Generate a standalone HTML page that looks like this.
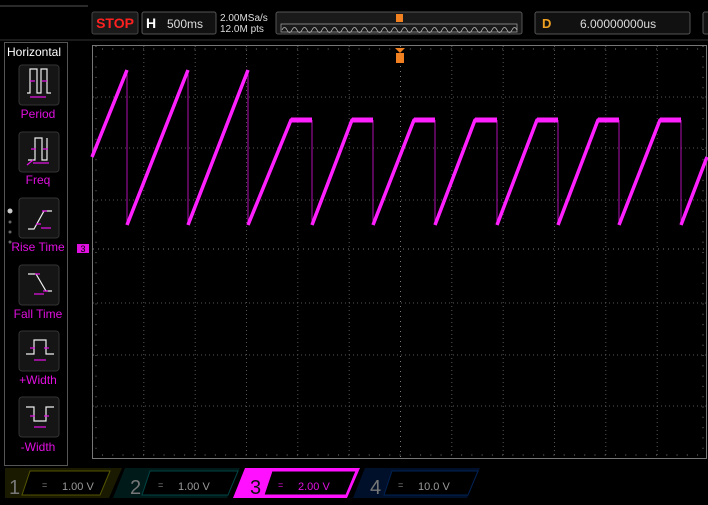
<!DOCTYPE html><html><head><style>
body{margin:0;background:#000;width:708px;height:500px;overflow:hidden;font-family:"Liberation Sans",sans-serif;}
</style></head><body>
<svg width="708" height="500" xmlns="http://www.w3.org/2000/svg" font-family="Liberation Sans, sans-serif">
<rect width="708" height="500" fill="#000"/>
<line x1="0" y1="6" x2="88" y2="6" stroke="#555"/>
<line x1="0" y1="40" x2="708" y2="40" stroke="#333"/>
<!-- top bar -->
<rect x="92" y="12" width="46" height="22" rx="2" fill="#1a1a1a" stroke="#444"/>
<text x="115" y="28" fill="#ff2020" font-size="14" font-weight="bold" text-anchor="middle">STOP</text>
<rect x="142" y="12" width="74" height="22" rx="2" fill="#111" stroke="#555"/>
<text x="146" y="28" fill="#fff" font-size="14" font-weight="bold">H</text>
<text x="167" y="28" fill="#ddd" font-size="12">500ms</text>
<text x="220" y="21" fill="#ddd" font-size="10">2.00MSa/s</text>
<text x="220" y="32" fill="#ddd" font-size="10">12.0M pts</text>
<rect x="276" y="12" width="246" height="22" rx="2" fill="#1a1a1a" stroke="#555"/>
<rect x="281" y="24" width="236" height="8" fill="none" stroke="#aaa" stroke-width="0.7"/>
<path d="M282 30 q2.5 -5 5 0 t5 0 t5 0 t5 0 t5 0 t5 0 t5 0 t5 0 t5 0 t5 0 t5 0 t5 0 t5 0 t5 0 t5 0 t5 0 t5 0 t5 0 t5 0 t5 0 t5 0 t5 0 t5 0 t5 0 t5 0 t5 0 t5 0 t5 0 t5 0 t5 0 t5 0 t5 0 t5 0 t5 0 t5 0 t5 0 t5 0 t5 0 t5 0 t5 0 t5 0 t5 0 t5 0 t5 0 t5 0 t5 0 t5 0" fill="none" stroke="#bbb" stroke-width="0.8"/>
<rect x="396" y="14" width="7" height="8" fill="#f08020"/>
<rect x="535" y="12" width="155" height="22" rx="2" fill="#111" stroke="#555"/>
<text x="542" y="28" fill="#f0a020" font-size="13" font-weight="bold">D</text>
<text x="580" y="28" fill="#ddd" font-size="12">6.00000000us</text>
<rect x="703" y="12" width="10" height="22" rx="2" fill="#111" stroke="#555"/>
<!-- left panel -->
<rect x="4.5" y="42.5" width="63" height="423" fill="#000" stroke="#555"/>
<text x="7" y="56" fill="#fff" font-size="12">Horizontal</text>
<g fill="#151515" stroke="#333">
<rect x="19" y="65" width="40" height="40" rx="3"/><rect x="19" y="132" width="40" height="40" rx="3"/>
<rect x="19" y="198" width="40" height="40" rx="3"/><rect x="19" y="265" width="40" height="40" rx="3"/>
<rect x="19" y="331" width="40" height="40" rx="3"/><rect x="19" y="397" width="40" height="40" rx="3"/></g>
<g fill="none" stroke="#eee" stroke-width="1.2">
<path d="M27 93 h3 v-24 h7 v24 h4 v-24 h6 v24 h4"/>
<path d="M28 160 h7 v-22 h7 v22 h5 v-22"/>
<path d="M28 229 h6 l10 -18 h8"/>
<path d="M28 274 h8 l10 17 h6"/>
<path d="M26 354 h8 v-14 h12 v14 h8"/>
<path d="M26 407 h8 v14 h12 v-14 h8"/></g>
<g stroke="#e010e0" stroke-width="1.3" fill="none">
<path d="M30 81 h5 M42 81 h5 M30 97 h16"/>
<path d="M31 149 h5 M43 149 h5 M33 163 h16 M27 165 l6 -5"/>
<path d="M36 224 h5 M42 211 h5 M41 228 h10"/>
<path d="M35 274 h5 M43 291 h5 M34 294 h10"/>
<path d="M30 348 h5 M44 348 h5 M34 360 h12"/>
<path d="M30 416 h5 M44 416 h5 M34 427 h12"/></g>
<g fill="#e010e0" font-size="12" text-anchor="middle">
<text x="38" y="118">Period</text><text x="38" y="184">Freq</text>
<text x="38" y="251">Rise Time</text><text x="38" y="318">Fall Time</text>
<text x="38" y="384">+Width</text><text x="38" y="451">-Width</text></g>
<circle cx="10" cy="211" r="2.5" fill="#ccc"/><circle cx="10" cy="222" r="1.5" fill="#666"/><circle cx="10" cy="232" r="1.5" fill="#666"/><circle cx="10" cy="242" r="1.5" fill="#666"/>
<!-- grid -->
<rect x="92.5" y="45.5" width="614" height="413" fill="none" stroke="#777"/>
<g stroke="#555" stroke-dasharray="1 3">
<line x1="143.8" y1="46" x2="143.8" y2="458"/><line x1="195.2" y1="46" x2="195.2" y2="458"/><line x1="246.5" y1="46" x2="246.5" y2="458"/><line x1="297.8" y1="46" x2="297.8" y2="458"/><line x1="349.2" y1="46" x2="349.2" y2="458"/><line x1="451.8" y1="46" x2="451.8" y2="458"/><line x1="503.2" y1="46" x2="503.2" y2="458"/><line x1="554.5" y1="46" x2="554.5" y2="458"/><line x1="605.8" y1="46" x2="605.8" y2="458"/><line x1="657.2" y1="46" x2="657.2" y2="458"/>
<line x1="93" y1="97" x2="706" y2="97"/><line x1="93" y1="148" x2="706" y2="148"/><line x1="93" y1="200" x2="706" y2="200"/><line x1="93" y1="303" x2="706" y2="303"/><line x1="93" y1="355" x2="706" y2="355"/><line x1="93" y1="406" x2="706" y2="406"/></g>
<g stroke="#777">
<line x1="93" y1="249" x2="706" y2="249" stroke-dasharray="1 4"/>
<line x1="400.5" y1="46" x2="400.5" y2="458" stroke-dasharray="1 4"/>
<line x1="93" y1="49" x2="706" y2="49" stroke-dasharray="1 9.26" stroke-dashoffset="-9"/>
<line x1="93" y1="455" x2="706" y2="455" stroke-dasharray="1 9.26" stroke-dashoffset="-9"/>
<line x1="96" y1="46" x2="96" y2="458" stroke-dasharray="1 9.3"/>
<line x1="703" y1="46" x2="703" y2="458" stroke-dasharray="1 9.3"/></g>
<path d="M395 48 h10 l-5 5z" fill="#f08020"/><rect x="396" y="53" width="8" height="10" fill="#f08020"/>
<rect x="77" y="244" width="12" height="9" fill="#e010e0"/><text x="83" y="252" fill="#000" font-size="9" text-anchor="middle">3</text>
<!-- waveform -->
<g stroke="#b010b0" stroke-width="1"><path d="M127 70V225M188 70V225M248 70V225M312 120V225M373 120V225M435 120V225M497 120V225M558 120V225M619 120V225M681 120V225"/></g>
<g stroke="#ff20ff" stroke-width="3.5" fill="none" stroke-linejoin="round">
<path d="M92 157L127 70M127 225L188 70M188 225L248 70M248 225L291 120H312M312 225L352 120H373M373 225L414 120H435M435 225L475 120H497M497 225L537 120H558M558 225L598 120H619M619 225L660 120H681M681 225L707 157"/></g>
<g stroke="#ff20ff" stroke-width="5"><path d="M291 120H312M352 120H373M414 120H435M475 120H497M537 120H558M598 120H619M660 120H681"/></g>
<!-- bottom channels -->
<path d="M5 468H122L109 498H5Z" fill="#1a1a00"/><text x="9" y="494" fill="#777" font-size="20">1</text>
<path d="M30 471H110L100 495H22Z" fill="#000" stroke="#555500"/><text x="42" y="488" fill="#888" font-size="9">=</text><text x="62" y="490" fill="#999" font-size="11">1.00 V</text>
<path d="M125 468H240L227 498H113Z" fill="#001a1a"/><text x="130" y="494" fill="#777" font-size="20">2</text>
<path d="M150 471H238L228 495H142Z" fill="#000" stroke="#004444"/><text x="158" y="488" fill="#888" font-size="9">=</text><text x="178" y="490" fill="#999" font-size="11">1.00 V</text>
<path d="M245 468H360L347 498H233Z" fill="#ff10ff"/><text x="250" y="494" fill="#111" font-size="20">3</text>
<path d="M272 471H356L346 495H264Z" fill="#000" stroke="#ff10ff"/><text x="278" y="488" fill="#e010e0" font-size="9">=</text><text x="298" y="490" fill="#e010e0" font-size="11">2.00 V</text>
<path d="M365 468H480L467 498H353Z" fill="#00102a"/><text x="370" y="494" fill="#777" font-size="20">4</text>
<path d="M392 471H478L468 495H384Z" fill="#000" stroke="#002255"/><text x="398" y="488" fill="#888" font-size="9">=</text><text x="418" y="490" fill="#999" font-size="11">10.0 V</text>
</svg>
</body></html>
